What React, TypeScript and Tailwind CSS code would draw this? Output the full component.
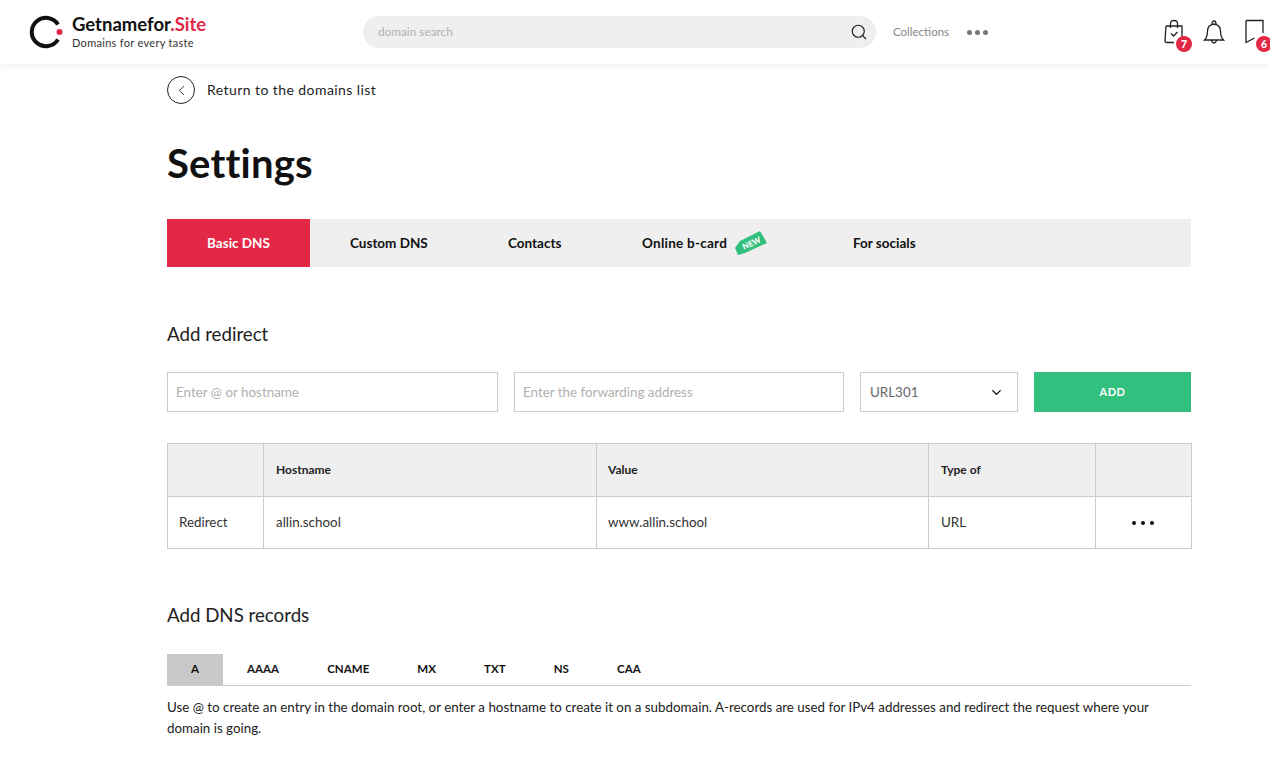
import { ChevronDown, ChevronLeft, Search } from "lucide-react";

const FONT = "font-['Lato','Noto_Sans',sans-serif]";

const DNS_TABS = ["A", "AAAA", "CNAME", "MX", "TXT", "NS", "CAA"];

function Badge({ value, className }: { value: number; className: string }) {
  return (
    <span
      className={`absolute top-[16px] flex size-4 items-center justify-center rounded-full bg-[#e32747] text-[10.5px] font-black leading-none text-white ${className}`}
    >
      {value}
    </span>
  );
}

function Logo() {
  return (
    <svg width="34" height="34" viewBox="0 0 34 34" fill="none" aria-hidden>
      <path d="M29 9.500A14.200 14.200 0 1 0 29 24.500" stroke="#111" strokeWidth="4" fill="none" />
      <circle cx="30.500" cy="17" r="3" fill="#e32747" />
    </svg>
  );
}

function Header() {
  return (
    <header className="flex h-16 items-center bg-white pl-[29px] shadow-[0_2px_8px_rgba(0,0,0,0.07)]">
      <Logo />
      <div className="ml-[9px] w-[291px]">
        <div className="text-[18.5px] font-bold leading-[22px] text-[#111]">
          Getnamefor<span className="text-[#e32747]">.Site</span>
        </div>
        <div className="text-[11px] leading-[16px] tracking-[0.3px] text-[#333]">
          Domains for every taste
        </div>
      </div>
      <div className="flex h-8 w-[513px] items-center justify-between rounded-2xl bg-[#efefef] pl-[15px] pr-[8px]">
        <span className="text-[11.8px] text-[#b0b0b0]">domain search</span>
        <Search className="size-[18px] text-[#222]" strokeWidth={1.5} aria-hidden />
      </div>
      <span className="ml-[17px] text-[11.5px] text-[#888]">Collections</span>
      <div className="ml-[18px] flex gap-[3px]">
        <span className="size-[5px] rounded-full bg-[#777]" />
        <span className="size-[5px] rounded-full bg-[#777]" />
        <span className="size-[5px] rounded-full bg-[#777]" />
      </div>
      <div className="ml-auto flex items-center">
        <div className="relative h-6 w-[30px]">
          <svg width="22" height="26" viewBox="0 0 22 26" fill="none" stroke="#222" strokeWidth="1.3" className="-mt-px" aria-hidden>
            <path d="M3 7h16v12M3 7L2 21.500Q2 23.500 4 23.500H11" />
            <path d="M7.500 9V4.500Q7.500 1.500 11 1.500T14.500 4.500V9" />
            <path d="M8 14.500l2.500 2.500 4-4" />
          </svg>
          <Badge value={7} className="left-[13px]" />
        </div>
        <svg width="22" height="26" viewBox="0 0 22 26" fill="none" stroke="#222" strokeWidth="1.3" className="ml-[10px]" aria-hidden>
          <path d="M1.500 21H20.500Q17.500 18 17.500 12Q17.500 6 11 5Q4.500 6 4.500 12Q4.500 18 1.500 21Z" />
          <path d="M9 5Q9 2 11 2T13 5" />
          <path d="M8.500 21Q9 24 11 24T13.500 21" />
        </svg>
        <div className="relative ml-[20px] h-6 w-[25px]">
          <svg width="20" height="26" viewBox="0 0 20 26" fill="none" stroke="#222" strokeWidth="1.3" className="-mt-px" aria-hidden>
            <path d="M1 1.500H18V14M1 1.500V23.500L9.500 19" />
          </svg>
          <Badge value={6} className="left-[11px]" />
        </div>
      </div>
    </header>
  );
}

function NewTag() {
  return (
    <svg width="33" height="26" viewBox="0 0 33 26" className="ml-2" aria-hidden>
      <path d="M5 11L25 1L32 13L10 23L3 25L0 18Z" fill="#33c07f" />
      <text
        x="16.500"
        y="16"
        fill="#fff"
        fontSize="8"
        fontWeight="900"
        textAnchor="middle"
        transform="rotate(-25 16.500 13)"
        fontFamily="Lato, sans-serif"
      >
        NEW
      </text>
    </svg>
  );
}

export default function App() {
  return (
    <div className={`h-[760px] overflow-hidden bg-white text-[#111] ${FONT}`}>
      <Header />
      <main className="ml-[167px] w-[1024px]">
        <div className="mt-[12px] flex items-center gap-[12px]">
          <span className="flex size-7 items-center justify-center rounded-full border border-[#222]">
            <ChevronLeft className="size-[17px] text-[#222]" strokeWidth={1.25} aria-hidden />
          </span>
          <span className="text-sm tracking-[0.43px] text-[#222]">Return to the domains list</span>
        </div>

        <h1 className="mt-[35px] text-[40px] font-bold leading-[48px] tracking-[0.2px] text-[#111]">
          Settings
        </h1>

        <nav className="mt-[32px] flex h-12 items-center bg-[#efefef] text-[13.5px] font-bold">
          <span className="flex h-full w-[143px] items-center justify-center bg-[#e32747] text-white">
            Basic DNS
          </span>
          <span className="w-[158px] pl-10">Custom DNS</span>
          <span className="w-[134px] pl-10">Contacts</span>
          <span className="flex w-[211px] items-center pl-10">
            <span className="tracking-[0.25px]">Online b-card</span>
            <NewTag />
          </span>
          <span className="pl-10">For socials</span>
        </nav>

        <h2 className="mt-[54px] text-[18.7px] leading-[26px] text-[#222]">Add redirect</h2>

        <form className="mt-[25px] flex h-10 gap-4 text-[13.4px]">
          <div className="flex w-[331px] items-center border border-[#ccc] pl-2 text-[#b0b0b0]">
            Enter @ or hostname
          </div>
          <div className="flex w-[330px] items-center border border-[#ccc] pl-2 text-[#b0b0b0]">
            Enter the forwarding address
          </div>
          <div className="flex w-[158px] items-center justify-between border border-[#ccc] pl-[9px] pr-[13px] text-[#666]">
            URL301
            <ChevronDown className="size-[15px] text-[#111]" strokeWidth={2.25} aria-hidden />
          </div>
          <button
            type="button"
            className="w-[157px] bg-[#33c07f] text-[11px] font-bold tracking-[0.6px] text-white"
          >
            ADD
          </button>
        </form>

        <table className="mt-[31px] w-[1024px] table-fixed border-collapse text-[13.4px] text-[#333]">
          <colgroup>
            <col className="w-[96px]" />
            <col className="w-[333px]" />
            <col className="w-[332px]" />
            <col className="w-[167px]" />
            <col className="w-[96px]" />
          </colgroup>
          <thead>
            <tr className="h-[53px] bg-[#efefef] text-left text-[12px] font-bold text-[#222]">
              <th className="border border-[#ccc]" />
              <th className="border border-[#ccc] pl-3 font-bold">Hostname</th>
              <th className="border border-[#ccc] pl-[11px] font-bold">Value</th>
              <th className="border border-[#ccc] pl-3 font-bold">Type of</th>
              <th className="border border-[#ccc]" />
            </tr>
          </thead>
          <tbody>
            <tr className="h-[52px]">
              <td className="border border-[#ccc] pl-[11px]">Redirect</td>
              <td className="border border-[#ccc] pl-3">allin.school</td>
              <td className="border border-[#ccc] pl-[11px]">www.allin.school</td>
              <td className="border border-[#ccc] pl-3">URL</td>
              <td className="border border-[#ccc] pr-[2px]">
                <div className="flex justify-center gap-[5px]">
                  <span className="size-1 rounded-full bg-[#111]" />
                  <span className="size-1 rounded-full bg-[#111]" />
                  <span className="size-1 rounded-full bg-[#111]" />
                </div>
              </td>
            </tr>
          </tbody>
        </table>

        <h2 className="mt-[53px] text-[18.7px] leading-[26px] text-[#222]">Add DNS records</h2>

        <div className="mt-[26px] flex h-8 items-stretch border-b border-[#ccc] text-[11.5px] font-bold tracking-[0.05px]">
          {DNS_TABS.map((tab) => (
            <span
              key={tab}
              className={
                tab === "A"
                  ? "flex w-14 items-center justify-center bg-[#c8c8c8] pb-px"
                  : "flex items-center px-6 pb-px"
              }
            >
              {tab}
            </span>
          ))}
        </div>

        <p className="mt-[11px] text-[13.35px] leading-[21px] text-[#222]">
          Use @ to create an entry in the domain root, or enter a hostname to create it on a subdomain.
          A-records are used for IPv4 addresses and redirect the request where your domain is going.
        </p>
      </main>
    </div>
  );
}
